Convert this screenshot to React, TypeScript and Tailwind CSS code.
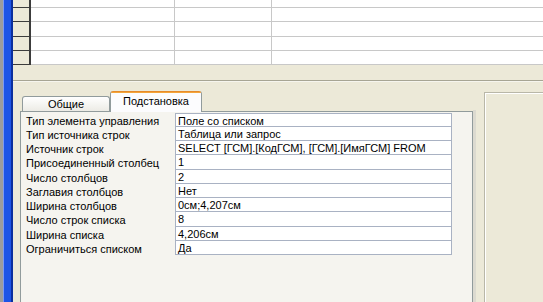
import React from 'react';

const rows: [string, string][] = [
  ['Тип элемента управления', 'Поле со списком'],
  ['Тип источника строк', 'Таблица или запрос'],
  ['Источник строк', 'SELECT [ГСМ].[КодГСМ], [ГСМ].[ИмяГСМ] FROM'],
  ['Присоединенный столбец', '1'],
  ['Число столбцов', '2'],
  ['Заглавия столбцов', 'Нет'],
  ['Ширина столбцов', '0см;4,207см'],
  ['Число строк списка', '8'],
  ['Ширина списка', '4,206см'],
  ['Ограничиться списком', 'Да'],
];

const gridRows = ['h-[8px]', 'h-[14px]', 'h-[15px]', 'h-[14px]', 'h-[14px]'];

const App: React.FC = () => {
  return (
    <div
      className="w-[543px] h-[302px] overflow-hidden flex bg-[#ece9d8] text-[11px] text-black"
      style={{ fontFamily: '"Liberation Sans", Arial, sans-serif' }}
    >
      {/* Left window edge */}
      <div className="flex h-full shrink-0">
        <div className="w-[3px] bg-[#9c9c9c]" />
        <div className="w-[1px] bg-[#7d9af2]" />
        <div className="w-[7px] bg-[#1d54e6]" />
        <div className="w-[2px] bg-[#0b2f9e]" />
      </div>

      <div className="flex-1 flex flex-col min-w-0">
        {/* Datasheet */}
        <div className="flex flex-col shrink-0">
          {gridRows.map((h, i) => (
            <div key={i} className={`flex ${h}`}>
              <div className="w-[18px] shrink-0 bg-[#ece9d8] border-r-2 border-b border-[#3c3c3c]" />
              <div className="w-[144px] shrink-0 bg-white border-r border-b border-[#c8c8c8]" />
              <div className="w-[97px] shrink-0 bg-white border-r border-b border-[#c8c8c8]" />
              <div className="flex-1 bg-white border-b border-[#c8c8c8]" />
            </div>
          ))}
        </div>
        <div className="h-[15px] shrink-0 bg-[#ece9d8]" />
        <div className="h-[1px] shrink-0 bg-[#a7a594]" />
        <div className="h-[1px] shrink-0 bg-[#f6f5ee]" />

        {/* Property sheet area */}
        <div className="flex-1 flex min-h-0">
          <div className="w-[7px] shrink-0" />
          <div className="w-[453px] shrink-0 flex flex-col">
            {/* Tabs */}
            <div className="h-[29px] flex items-end pl-[2px] shrink-0">
              <div className="w-[88px] h-[15px] border border-b-0 border-[#919b9c] rounded-t-[3px] bg-gradient-to-b from-[#ffffff] to-[#ecebe5] flex items-center justify-center pt-[1px]">
                Общие
              </div>
              <div className="w-[92px] h-[21px] -mb-[1px] relative border-x border-[#919b9c] rounded-t-[3px] bg-[#fcfcfe] flex flex-col">
                <div className="h-[3px] rounded-t-[3px] bg-[#f4a53a] border-t border-[#e68b2c]" />
                <div className="flex-1 flex items-center justify-center pb-[3px]">Подстановка</div>
              </div>
            </div>
            {/* Tab body */}
            <div className="flex-1 border border-b-0 border-[#919b9c] bg-[#f5f4ef] pl-[1px] pt-[1px]">
              <div className="w-[430px] flex flex-col">
                {rows.map(([label, value], i) => (
                  <div key={i} className={`flex ${i === 3 || i === 7 ? 'h-[15px]' : 'h-[14px]'}`}>
                    <div className="w-[153px] shrink-0 pl-[4px] pt-[1px] leading-[14px] whitespace-nowrap">{label}</div>
                    <div
                      className={`flex-1 bg-white border-x border-b border-[#a9b2c3] pl-[2px] pt-[1px] whitespace-nowrap overflow-hidden ${
                        i === 0 ? 'border-t' : ''
                      } leading-[12px]`}
                    >
                      {value}
                    </div>
                  </div>
                ))}
              </div>
            </div>
          </div>
          <div className="w-[3px] shrink-0 mt-[28px] bg-[#dcdad0]" />
          <div className="w-[8px] shrink-0" />
          <div className="flex-1 mt-[10px] border-l border-t border-[#b9b7a8] shadow-[inset_1px_1px_0_#ffffff] bg-[#ece9d8]" />
        </div>
      </div>
    </div>
  );
};

export default App;
